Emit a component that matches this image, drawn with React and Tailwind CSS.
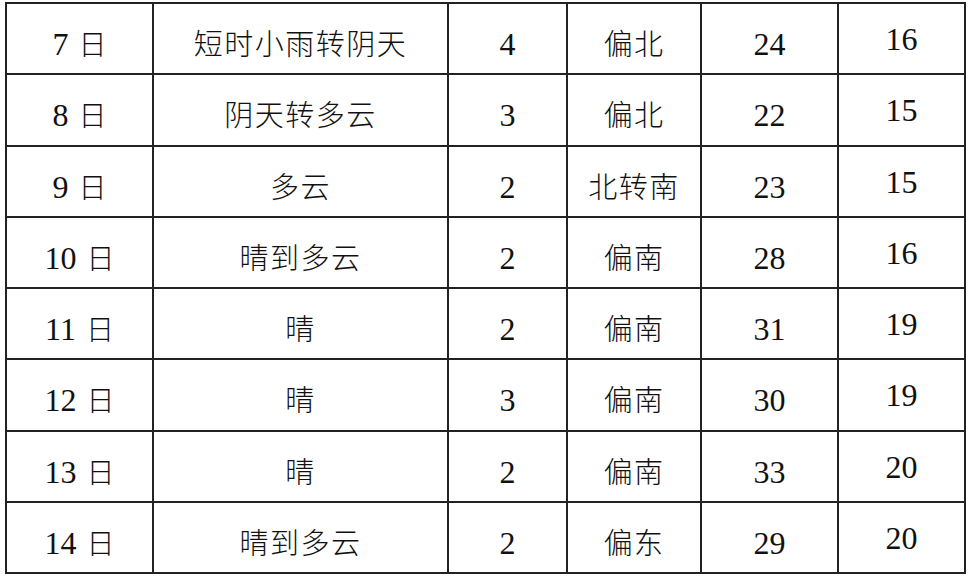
const rows = [
  { day: '7', weather: '短时小雨转阴天', level: '4', wind: '偏北', high: '24', low: '16' },
  { day: '8', weather: '阴天转多云', level: '3', wind: '偏北', high: '22', low: '15' },
  { day: '9', weather: '多云', level: '2', wind: '北转南', high: '23', low: '15' },
  { day: '10', weather: '晴到多云', level: '2', wind: '偏南', high: '28', low: '16' },
  { day: '11', weather: '晴', level: '2', wind: '偏南', high: '31', low: '19' },
  { day: '12', weather: '晴', level: '3', wind: '偏南', high: '30', low: '19' },
  { day: '13', weather: '晴', level: '2', wind: '偏南', high: '33', low: '20' },
  { day: '14', weather: '晴到多云', level: '2', wind: '偏东', high: '29', low: '20' },
]

const num = 'border-2 border-[#222] p-0 pt-[25px] align-top text-center leading-[30px] text-[32px]'
const cjk = 'border-2 border-[#222] p-0 pt-[26px] align-top text-center leading-[30px] text-[29px] tracking-[1.5px] font-light'

export default function App() {
  return (
    <div
      className="w-[969px] h-[580px] bg-white overflow-hidden pt-[2px] pl-[5px] text-[#111]"
      style={{ fontFamily: '"Liberation Serif", "Noto Sans CJK SC", serif' }}
    >
      <table className="border-collapse table-fixed w-[961px]">
        <colgroup>
          <col className="w-[147px]" />
          <col className="w-[295px]" />
          <col className="w-[119px]" />
          <col className="w-[134px]" />
          <col className="w-[137px]" />
          <col className="w-[127px]" />
        </colgroup>
        <tbody>
          {rows.map((r) => (
            <tr key={r.day} className="h-[71.25px]">
              <td className={num}>
                {r.day}
                <span className="ml-[10px] text-[28px] font-light">日</span>
              </td>
              <td className={cjk}>{r.weather}</td>
              <td className={num}>{r.level}</td>
              <td className={cjk}>{r.wind}</td>
              <td className={num}>{r.high}</td>
              <td className="border-2 border-[#222] p-0 pt-[20px] align-top text-center leading-[30px] text-[32px]">{r.low}</td>
            </tr>
          ))}
        </tbody>
      </table>
    </div>
  )
}
